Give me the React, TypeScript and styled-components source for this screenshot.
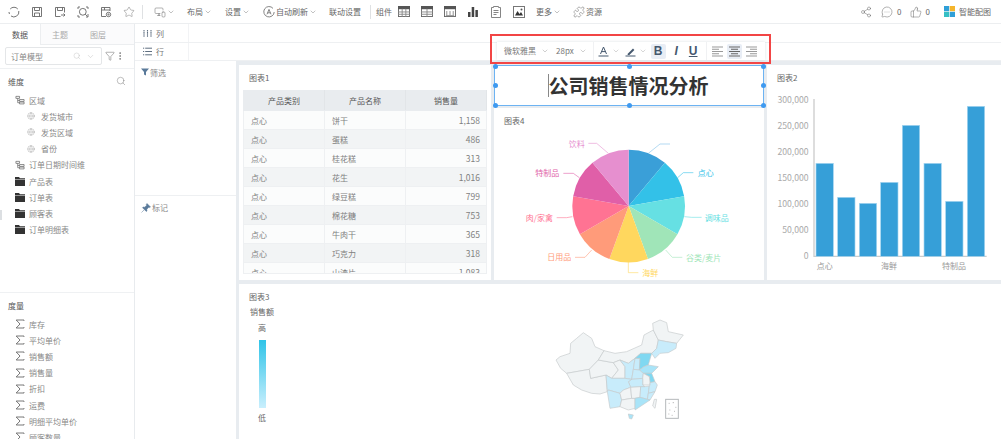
import React from "react";
import styled, { createGlobalStyle } from "styled-components";
import {
  ChevronDown,
  EllipsisVertical,
  Filter,
  Globe,
  MessageCircleMore,
  MonitorSmartphone,
  Puzzle,
  Search,
  Share2,
  Star,
  ThumbsUp,
} from "lucide-react";

const GlobalStyle = createGlobalStyle`
  html, body {
    margin: 0;
    background: #fff;
  }
  * {
    box-sizing: border-box;
  }
`;

const Page = styled.div`
  width: 1001px;
  height: 439px;
  position: relative;
  overflow: hidden;
  display: flex;
  flex-direction: column;
  background: #fff;
  color: #666;
  font-family: "Noto Sans CJK SC", "Liberation Sans", sans-serif;
  font-size: 8px;
`;

const Toolbar = styled.header`
  height: 24px;
  flex: none;
  display: flex;
  align-items: center;
  padding: 0 10px 0 2px;
  border-bottom: 1px solid #eceef0;
  color: #666;
`;

const ToolSlot = styled.span`
  width: 23px;
  height: 23px;
  flex: none;
  display: flex;
  align-items: center;
  justify-content: center;
  color: #777;
`;

const ToolDivider = styled.span<{ $ml: number }>`
  width: 1px;
  height: 14px;
  flex: none;
  margin-left: ${(p) => p.$ml}px;
  background: #dfe1e3;
`;

const ToolItem = styled.span<{ $ml: number }>`
  display: flex;
  align-items: center;
  flex: none;
  gap: 1px;
  line-height: 12px;
  margin-left: ${(p) => p.$ml}px;
  svg {
    color: #666;
    flex: none;
  }
`;

const ToolRight = styled.div`
  margin-left: auto;
  display: flex;
  align-items: center;
`;

const Body = styled.div`
  flex: 1;
  min-height: 0;
  display: flex;
`;

const Sidebar = styled.aside`
  width: 135px;
  flex: none;
  position: relative;
  display: flex;
  flex-direction: column;
  border-right: 1px solid #e8ebee;
`;

const Tabs = styled.div`
  height: 21px;
  flex: none;
  display: flex;
  background: #fbfbfc;
  border-bottom: 1px solid #eceef0;
`;

const Tab = styled.span<{ $active?: boolean }>`
  width: ${(p) => (p.$active ? 41 : 38)}px;
  height: ${(p) => (p.$active ? 21 : 20)}px;
  display: flex;
  align-items: center;
  justify-content: center;
  color: ${(p) => (p.$active ? "#555" : "#aaa")};
  background: ${(p) => (p.$active ? "#fff" : "transparent")};
  border-right: ${(p) => (p.$active ? "1px solid #eceef0" : "none")};
`;

const ModelRow = styled.div`
  height: 24px;
  flex: none;
  display: flex;
  align-items: flex-start;
  padding: 2px 0 0 5px;
  border-bottom: 1px solid #eff1f3;
`;

const ModelSelect = styled.div`
  width: 97px;
  height: 18px;
  display: flex;
  align-items: center;
  padding: 0 6px 0 5px;
  border: 1px solid #e4e6e8;
  border-radius: 2px;
  color: #888;
  svg {
    color: #bbb;
  }
  svg + svg {
    margin-left: 5px;
  }
`;

const ModelName = styled.span`
  flex: 1;
`;

const ModelTools = styled.div`
  display: flex;
  align-items: center;
  height: 18px;
  margin-left: 3px;
  color: #666;
`;

const FieldSection = styled.section<{ $height: number }>`
  height: ${(p) => p.$height}px;
  flex: none;
  overflow: hidden;
  padding-top: 3px;
`;

const SectionHead = styled.div`
  height: 18px;
  margin-bottom: 2px;
  display: flex;
  align-items: center;
  justify-content: space-between;
  padding: 0 8px;
  color: #555;
  svg {
    color: #666;
  }
`;

const FieldRow = styled.div<{ $child?: boolean }>`
  height: 16.2px;
  display: flex;
  align-items: center;
  gap: ${(p) => (p.$child ? 6 : 4)}px;
  padding-left: ${(p) => (p.$child ? 27 : 15)}px;
  color: #888;
  white-space: nowrap;
  svg {
    flex: none;
  }
`;

const SectionRule = styled.div`
  height: 1px;
  flex: none;
  background: #eff1f3;
`;

const ResizeHandle = styled.span`
  position: absolute;
  left: 0;
  top: 186px;
  width: 2px;
  height: 10px;
  background: #dcdfe2;
`;

const Work = styled.div`
  flex: 1;
  min-width: 0;
  display: flex;
  flex-direction: column;
`;

const ShelfRow = styled.div<{ $height: number }>`
  height: ${(p) => p.$height}px;
  flex: none;
  display: flex;
  align-items: center;
  border-bottom: 1px solid #eef0f2;
`;

const ShelfLabel = styled.span`
  width: 54px;
  height: 100%;
  display: flex;
  align-items: center;
  gap: 4px;
  padding-left: 8px;
  border-right: 1px solid #f2f3f5;
  color: #777;
`;

const WorkBody = styled.div`
  flex: 1;
  min-height: 0;
  display: flex;
`;

const Marks = styled.aside`
  width: 101px;
  flex: none;
  display: flex;
  flex-direction: column;
`;

const MarkBlock = styled.div<{ $height?: number }>`
  height: ${(p) => (p.$height ? `${p.$height}px` : "auto")};
  flex: ${(p) => (p.$height ? "none" : "1")};
  display: flex;
  align-items: flex-start;
  gap: 1px;
  padding: 7px 0 0 6px;
  line-height: 10px;
  color: #888;
  svg {
    flex: none;
  }
`;

const MarkRule = styled.div`
  height: 1px;
  background: #eef0f2;
`;

const Canvas = styled.main`
  flex: 1;
  min-width: 0;
  display: grid;
  grid-template-columns: 252px 270px 1fr;
  grid-template-rows: 215px 1fr;
  column-gap: 3px;
  row-gap: 4px;
  padding: 4px 0 0 3px;
  background: #e8ecf0;
`;

const Panel = styled.section`
  background: #fff;
  min-width: 0;
  min-height: 0;
  overflow: hidden;
`;

const MapPanel = styled(Panel)`
  grid-column: 1 / 4;
`;

const MiddleColumn = styled.div`
  display: flex;
  flex-direction: column;
  gap: 2px;
  min-width: 0;
`;

const PiePanel = styled(Panel)`
  flex: 1;
`;

const PanelTitle = styled.div`
  height: 24px;
  display: flex;
  align-items: center;
  padding-left: 10px;
  color: #666;
`;

const TitlePanel = styled.section`
  height: 41px;
  flex: none;
  position: relative;
  display: flex;
  align-items: center;
  justify-content: center;
  padding-right: 2px;
  background: #fff;
  border: 1px solid #6db3f2;
  color: #333;
  font-size: 20px;
  font-weight: 700;
`;

const Caret = styled.span`
  width: 1px;
  height: 23px;
  background: #888;
  flex: none;
`;

const Handle = styled.span<{ $x: number; $y: number }>`
  position: absolute;
  left: ${(p) => p.$x}%;
  top: ${(p) => p.$y}%;
  width: 5px;
  height: 5px;
  margin: -2.5px 0 0 -2.5px;
  border-radius: 50%;
  background: #3f9af0;
`;

const TableClip = styled.div`
  height: 184px;
  margin: 1px 4px 0;
  overflow: hidden;
  border-bottom: 1px solid #eef0f2;
`;

const DataTable = styled.table`
  width: 244px;
  table-layout: fixed;
  border-collapse: collapse;
  font-size: 8px;
`;

const HeadCell = styled.th`
  height: 20px;
  padding: 0;
  background: #e9ecef;
  border: 1px solid #e9ecef;
  border-right-color: #e2e5e8;
  color: #555;
  font-weight: 400;
  text-align: center;
`;

const BodyRow = styled.tr<{ $even: boolean }>`
  background: ${(p) => (p.$even ? "#f2f4f5" : "#fbfcfc")};
`;

const BodyCell = styled.td<{ $num?: boolean }>`
  height: 19px;
  padding: ${(p) => (p.$num ? "0 6px 0 0" : "0 0 0 7px")};
  border: 1px solid #eef0f2;
  color: #808080;
  text-align: ${(p) => (p.$num ? "right" : "left")};
  font-size: ${(p) => (p.$num ? "8.5px" : "8px")};
`;

const ChartSvg = styled.svg<{ $height: number }>`
  display: block;
  width: 100%;
  height: ${(p) => p.$height}px;
`;

const ChartText = styled.text`
  font-family: "Noto Sans CJK SC", "Liberation Sans", sans-serif;
`;

const MapRow = styled.div`
  display: flex;
  padding-left: 11px;
`;

const Legend = styled.div`
  width: 24px;
  flex: none;
  display: flex;
  flex-direction: column;
  align-items: center;
  line-height: 8px;
  color: #666;
  white-space: nowrap;
`;

const LegendLevel = styled.span<{ $mt: number }>`
  margin-top: ${(p) => p.$mt}px;
`;

const LegendBar = styled.span`
  width: 7px;
  height: 68px;
  flex: none;
  margin-top: 8px;
  background: linear-gradient(#2fc4e8, #c9effd);
`;

const MapSvg = styled.svg`
  width: 200px;
  height: 129px;
  flex: none;
  margin: 2px 0 0 246px;
`;

const FloatBar = styled.div`
  position: absolute;
  left: 497px;
  top: 42px;
  width: 268px;
  height: 18px;
  display: flex;
  align-items: center;
  background: #fff;
  box-shadow: 0 0 3px rgba(90, 110, 130, 0.2);
  color: #777;
`;

const FloatFocus = styled.div`
  position: absolute;
  left: 490px;
  top: 34px;
  width: 281px;
  height: 30px;
  border: 2px solid #f24545;
  pointer-events: none;
`;

const FloatText = styled.span<{ $ml: number }>`
  margin-left: ${(p) => p.$ml}px;
  display: flex;
  align-items: center;
  gap: 5px;
  line-height: 12px;
  flex: none;
  svg {
    color: #888;
  }
`;

const FloatSep = styled.span<{ $ml: number }>`
  width: 1px;
  height: 18px;
  flex: none;
  margin-left: ${(p) => p.$ml}px;
  background: #f0f1f3;
`;

const FloatButton = styled.span<{ $on?: boolean; $ml: number; $italic?: boolean; $under?: boolean }>`
  width: 15px;
  height: 15px;
  flex: none;
  margin-left: ${(p) => p.$ml}px;
  display: flex;
  align-items: center;
  justify-content: center;
  border-radius: 2px;
  background: ${(p) => (p.$on ? "#e8edf5" : "transparent")};
  color: #45586e;
  font-family: "Liberation Sans", sans-serif;
  font-size: 12px;
  font-weight: 700;
  font-style: ${(p) => (p.$italic ? "italic" : "normal")};
  text-decoration: ${(p) => (p.$under ? "underline" : "none")};
`;

const ColorMark = styled.span<{ $ml: number }>`
  margin-left: ${(p) => p.$ml}px;
  flex: none;
  display: flex;
  align-items: center;
  color: #45586e;
  svg:last-child {
    margin-left: 3px;
    color: #999;
  }
`;

const tableRows = [
  ["饼干", "1,158"],
  ["蛋糕", "486"],
  ["桂花糕", "313"],
  ["花生", "1,016"],
  ["绿豆糕", "799"],
  ["棉花糖", "753"],
  ["牛肉干", "365"],
  ["巧克力", "318"],
  ["山渣片", "1,083"],
];

const regionFields = ["发货城市", "发货区域", "省份"];
const tables = ["产品表", "订单表", "顾客表", "订单明细表"];
const measures = ["库存", "平均单价", "销售额", "销售量", "折扣", "运费", "明细平均单价", "顾客数量"];

const handles = [
  [0, 0],
  [50, 0],
  [100, 0],
  [0, 50],
  [100, 50],
  [0, 100],
  [50, 100],
  [100, 100],
];

const slices = ["#3a9fd8", "#33c1e8", "#66e0e3", "#a0e5b8", "#ffd75e", "#ff9b7a", "#ff7393", "#e05fa8", "#e68fcf"];

const pieLabels = [
  { text: "", color: "#7cc0e8", line: "460,145 495,117 525,117", x: 0, y: 0 },
  { text: "点心", color: "#33c1e8", line: "548,218 565,203 595,203", x: 632, y: 202 },
  { text: "调味品", color: "#66e0e3", line: "568,335 590,337 620,337", x: 665, y: 336 },
  { text: "谷类/麦片", color: "#a0e5b8", line: "512,435 532,457 562,457", x: 626, y: 456 },
  { text: "海鲜", color: "#ffd75e", line: "400,470 400,503 430,503", x: 466, y: 501 },
  { text: "日用品", color: "#ff9b7a", line: "290,435 270,457 240,457", x: 193, y: 455 },
  { text: "肉/家禽", color: "#ff7393", line: "232,335 215,338 185,338", x: 133, y: 337 },
  { text: "特制品", color: "#e05fa8", line: "253,218 235,205 205,205", x: 157, y: 201 },
  { text: "饮料", color: "#e68fcf", line: "340,145 305,115 280,115", x: 245, y: 114 },
];

const slicePath = (i: number) => {
  const cx = 401;
  const cy = 303;
  const r = 169;
  const a0 = ((i * 40 - 90) * Math.PI) / 180;
  const a1 = (((i + 1) * 40 - 90) * Math.PI) / 180;
  const p = (a: number) => `${cx + r * Math.cos(a)},${cy + r * Math.sin(a)}`;
  return `M${cx},${cy} L${p(a0)} A${r},${r} 0 0 1 ${p(a1)} Z`;
};

const bars = [
  { x: 153, top: 295 },
  { x: 218, top: 397 },
  { x: 283, top: 415 },
  { x: 347, top: 352 },
  { x: 412, top: 181 },
  { x: 477, top: 295 },
  { x: 542, top: 409 },
  { x: 607, top: 124 },
];

const yTicks = [
  ["300,000", 102],
  ["250,000", 180],
  ["200,000", 258],
  ["150,000", 336],
  ["100,000", 414],
  ["50,000", 492],
  ["0", 570],
] as const;

const GRAY = "#f1f4f5";
const PALE = "#c8ecfb";
const MID = "#a9e4f8";
const DEEP = "#80d8f1";

// outlines share their corner points so no holes show between provinces
const provinces = [
  { fill: GRAY, d: "M108,150 L120,140 L150,130 L152,100 L170,85 L190,68 L215,85 L225,110 L252,122 L235,150 L208,178 L140,190 L122,175 Z" },
  { fill: GRAY, d: "M140,190 L208,178 L212,205 L258,195 L262,245 L240,252 L215,250 L185,240 L160,225 Z" },
  { fill: GRAY, d: "M208,178 L235,150 L280,158 L295,180 L275,205 L258,195 L212,205 Z" },
  { fill: GRAY, d: "M252,122 L285,130 L320,125 L365,105 L372,75 L400,60 L415,90 L410,115 L395,130 L362,130 L345,145 L325,160 L300,150 L280,158 L235,150 Z" },
  { fill: GRAY, d: "M400,60 L398,40 L420,30 L440,38 L445,65 L490,75 L470,100 L440,95 L415,90 Z" },
  { fill: GRAY, d: "M280,158 L300,150 L315,170 L315,205 L275,205 L295,180 Z" },
  { fill: PALE, d: "M300,150 L325,160 L345,145 L340,178 L335,208 L315,205 L315,170 Z" },
  { fill: PALE, d: "M345,145 L360,145 L358,180 L340,178 Z" },
  { fill: DEEP, d: "M345,145 L362,130 L395,130 L385,165 L372,170 L358,180 L360,145 Z" },
  { fill: PALE, d: "M415,90 L440,95 L470,100 L468,115 L445,128 L420,130 L405,145 L395,130 L410,115 Z" },
  { fill: MID, d: "M358,180 L372,170 L385,165 L415,170 L395,190 L370,190 Z" },
  { fill: PALE, d: "M340,178 L358,180 L370,190 L368,205 L335,208 Z" },
  { fill: DEEP, d: "M370,190 L395,190 L405,215 L390,218 L388,200 Z" },
  { fill: GRAY, d: "M370,190 L388,200 L390,218 L390,225 L368,225 L368,205 Z" },
  { fill: PALE, d: "M335,208 L368,205 L368,225 L375,230 L332,232 L325,215 Z" },
  { fill: PALE, d: "M258,195 L275,205 L315,205 L335,208 L325,215 L332,232 L310,240 L300,250 L265,240 L262,245 Z" },
  { fill: PALE, d: "M262,245 L265,240 L300,250 L305,270 L300,290 L270,295 Z" },
  { fill: GRAY, d: "M300,250 L310,240 L332,232 L335,265 L305,270 Z" },
  { fill: GRAY, d: "M305,270 L335,265 L345,265 L345,295 L325,300 L300,290 Z" },
  { fill: GRAY, d: "M332,232 L362,230 L360,262 L345,265 L335,265 Z" },
  { fill: PALE, d: "M362,230 L375,230 L388,228 L385,250 L382,268 L360,262 Z" },
  { fill: PALE, d: "M390,218 L405,215 L412,225 L405,245 L385,250 L388,228 L390,225 Z" },
  { fill: PALE, d: "M385,250 L405,245 L390,270 L382,268 Z" },
  { fill: MID, d: "M360,262 L382,268 L390,270 L345,300 L345,265 Z" },
  { fill: MID, d: "M325,312 L340,315 L335,327 L328,325 Z" },
  { fill: GRAY, d: "M403,268 L410,268 L405,295 L398,288 Z" },
];

const stroke = { fill: "none", stroke: "#666", strokeWidth: 0.9 };

const RingGlyph = () => (
  <svg width="12" height="12" viewBox="0 0 12 12">
    <path d="M2.2 3A5 5 0 0 1 9.8 3M10.8 5A5 5 0 0 1 3 10M1.5 8A5 5 0 0 1 1 6" {...stroke} />
  </svg>
);

const SaveGlyph = () => (
  <svg width="12" height="12" viewBox="0 0 12 12">
    <path d="M1.5 1.5h9v9h-9zM3.5 1.5v3h5v-3M3.5 10.5v-3.5h5v3.5" {...stroke} />
  </svg>
);

const SaveAsGlyph = () => (
  <svg width="12" height="12" viewBox="0 0 12 12">
    <path d="M6.5 10.5h-5v-9h9v5M3.5 1.5v3h5v-3M7 9h4M9.5 7.5L11 9l-1.5 1.5" {...stroke} />
  </svg>
);

const PreviewGlyph = () => (
  <svg width="12" height="12" viewBox="0 0 12 12">
    <path d="M1 3V1h2M9 1h2v2M1 9v2h2M11 8v3H9" {...stroke} />
    <circle cx="5.8" cy="5.8" r="3.4" {...stroke} />
    <path d="M8.2 8.2l2.3 2.3" {...stroke} />
  </svg>
);

const TemplateGlyph = () => (
  <svg width="12" height="12" viewBox="0 0 12 12">
    <path d="M6 10.5H1.5v-9h8.5V5M1.5 4h8.5M4.5 1.5V4" {...stroke} />
    <circle cx="8.5" cy="8.5" r="2.2" {...stroke} />
    <circle cx="8.5" cy="8.5" r="0.6" {...stroke} />
  </svg>
);

const TableGlyph = ({ variant }: { variant: number }) => (
  <svg width="12" height="11" viewBox="0 0 13 12">
    <rect x="0.5" y="0.5" width="12" height="11" fill="#fff" stroke="#666" />
    <rect x="0" y="0" width="13" height="3.5" fill="#555" />
    {variant === 2 ? (
      <path d="M3 5.5V10M6.5 5.5V10M10 5.5V10M2 10.5H11" stroke="#888" fill="none" />
    ) : (
      <path d={variant === 1 ? "M0 6.5H13M0 9H13M6.5 3V12" : "M0 6.5H13M0 9H13M4.5 3V12M8.5 3V12"} stroke="#888" fill="none" />
    )}
  </svg>
);

const BarGlyph = () => (
  <svg width="12" height="12" viewBox="0 0 12 12">
    <path d="M1 6h2.5v5H1zM4.7 1h2.5v10H4.7zM8.4 4h2.5v7H8.4z" fill="#444" />
  </svg>
);

const NoteGlyph = () => (
  <svg width="12" height="13" viewBox="0 0 12 13">
    <path d="M1.5 2.5h2V1.5h5v1h2v10h-9z M3.5 5.5h5M3.5 7.5h5M3.5 9.5h3" fill="none" stroke="#777" strokeWidth="0.9" />
  </svg>
);

const ImageGlyph = () => (
  <svg width="12" height="12" viewBox="0 0 12 12">
    <rect x="0.5" y="0.5" width="11" height="11" fill="#fff" stroke="#777" />
    <path d="M2 9.5L4.5 5l2 3 1.5-2 2 3.5z" fill="#333" />
    <circle cx="8.5" cy="3.5" r="1" fill="#555" />
  </svg>
);

const AutoGlyph = () => (
  <svg width="12" height="12" viewBox="0 0 12 12">
    <path d="M10 2.4A5.2 5.2 0 1 0 11.2 6" fill="none" stroke="#666" strokeWidth="0.8" />
    <path d="M4 8.3L6 3.4l2 4.9M4.7 6.8h2.6" fill="none" stroke="#666" strokeWidth="0.8" />
  </svg>
);

const LogoGlyph = () => (
  <svg width="11" height="11" viewBox="0 0 11 11">
    <rect x="0" y="0" width="5.2" height="5.2" fill="#2f9fd8" />
    <rect x="5.8" y="0" width="5.2" height="5.2" fill="#f5b52c" />
    <rect x="0" y="5.8" width="5.2" height="5.2" fill="#35bfc4" />
    <rect x="5.8" y="5.8" width="5.2" height="5.2" fill="#2f9fd8" />
  </svg>
);

const TreeGlyph = () => (
  <svg width="10" height="10" viewBox="0 0 11 10">
    <path d="M1 1h4v2.2H1zM3 3.2V8h2M3 5.5h2M5 4.5h5v2H5zM5 7.3h5v2H5z" fill="none" stroke="#666" strokeWidth="0.8" />
  </svg>
);

const FolderGlyph = () => (
  <svg width="10" height="9" viewBox="0 0 10 9">
    <path d="M0 0h4l1 1.2h5V2H0zM0 2.6h10V9H0z" fill="#333" />
  </svg>
);

const SumGlyph = () => (
  <svg width="10" height="10" viewBox="0 0 10 10">
    <path d="M9 1.8V1H1.2L5 5 1.2 9H9v-.8" fill="none" stroke="#555" strokeWidth="0.8" />
  </svg>
);

const ColumnsGlyph = () => (
  <svg width="9" height="9" viewBox="0 0 9 9">
    <path d="M1 1v7M4.5 1v7M8 1v7" fill="none" stroke="#5f6f80" strokeWidth="1.1" strokeDasharray="1.6 0.5" />
  </svg>
);

const RowsGlyph = () => (
  <svg width="9" height="9" viewBox="0 0 9 9">
    <path d="M0 1.2h1.2M2.2 1.2H9M0 4.5h1.2M2.2 4.5H9M0 7.8h1.2M2.2 7.8H9" fill="none" stroke="#5f6f80" strokeWidth="1" />
  </svg>
);

const FunnelGlyph = () => (
  <svg width="8" height="8" viewBox="0 0 8 8">
    <path d="M0 .5h8L5 4v3.5L3 6.5V4z" fill="#5a7a9a" />
  </svg>
);

const PinGlyph = () => (
  <svg width="10" height="10" viewBox="0 0 10 10">
    <path d="M6 .5L9.5 4 8.5 4.6 7.8 4.2 5.8 6.3 6 8 5.2 8.4 1.6 4.8 2 4l1.7.2 2-2-.4-.7zM3 7L.5 9.5" fill="#5a7a9a" stroke="#5a7a9a" strokeWidth="0.5" />
  </svg>
);

const FontColorGlyph = () => (
  <svg width="11" height="11" viewBox="0 0 11 11">
    <path d="M2.5 8L5.5 1l3 7M3.6 5.6h3.8" fill="none" stroke="#45586e" strokeWidth="1" />
    <rect x="0.5" y="9.5" width="10" height="1" fill="#45586e" />
  </svg>
);

const FillColorGlyph = () => (
  <svg width="11" height="11" viewBox="0 0 11 11">
    <path d="M3 7.5L8 2.5l1.4 1.4-5 5L2.5 9z" fill="#45586e" />
    <rect x="0.5" y="9.5" width="10" height="1" fill="#45586e" />
  </svg>
);

const AlignGlyph = ({ side, color }: { side: "left" | "center" | "right"; color: string }) => {
  const line = (y: number, w: number) => {
    const x = side === "left" ? 0 : side === "right" ? 11 - w : (11 - w) / 2;
    return `M${x},${y}h${w}`;
  };
  return (
    <svg width="11" height="11" viewBox="0 0 11 11">
      <path
        d={[line(1, 11), line(3.2, 7), line(5.5, 11), line(7.8, 7), line(10, 11)].join("")}
        fill="none"
        stroke={color}
        strokeWidth="1.1"
      />
    </svg>
  );
};

const Icon = { size: 12, strokeWidth: 1 };
const Chevron = () => <ChevronDown size={8} strokeWidth={1.2} />;

export default function App() {
  return (
    <>
      <GlobalStyle />
      <Page>
        <Toolbar>
          <ToolSlot><RingGlyph /></ToolSlot>
          <ToolSlot><SaveGlyph /></ToolSlot>
          <ToolSlot><SaveAsGlyph /></ToolSlot>
          <ToolSlot><PreviewGlyph /></ToolSlot>
          <ToolSlot><TemplateGlyph /></ToolSlot>
          <ToolSlot><Star {...Icon} /></ToolSlot>
          <ToolDivider $ml={2} />
          <ToolItem $ml={11}><MonitorSmartphone {...Icon} /><Chevron /></ToolItem>
          <ToolItem $ml={12}>布局<Chevron /></ToolItem>
          <ToolItem $ml={13}>设置<Chevron /></ToolItem>
          <ToolItem $ml={13}><AutoGlyph />自动刷新<Chevron /></ToolItem>
          <ToolItem $ml={12}>联动设置</ToolItem>
          <ToolDivider $ml={9} />
          <ToolItem $ml={5}>组件</ToolItem>
          <ToolSlot><TableGlyph variant={0} /></ToolSlot>
          <ToolSlot><TableGlyph variant={1} /></ToolSlot>
          <ToolSlot><TableGlyph variant={2} /></ToolSlot>
          <ToolSlot><BarGlyph /></ToolSlot>
          <ToolSlot><NoteGlyph /></ToolSlot>
          <ToolSlot><ImageGlyph /></ToolSlot>
          <ToolItem $ml={6}>更多<Chevron /></ToolItem>
          <ToolItem $ml={12}><Puzzle {...Icon} />资源</ToolItem>
          <ToolRight>
            <ToolItem $ml={0}><Share2 {...Icon} /></ToolItem>
            <ToolItem $ml={9}><MessageCircleMore {...Icon} /></ToolItem>
            <ToolItem $ml={4}>0</ToolItem>
            <ToolItem $ml={8}><ThumbsUp {...Icon} /></ToolItem>
            <ToolItem $ml={4}>0</ToolItem>
            <ToolItem $ml={14}><LogoGlyph /></ToolItem>
            <ToolItem $ml={4}>智能配图</ToolItem>
          </ToolRight>
        </Toolbar>

        <Body>
          <Sidebar>
            <Tabs>
              <Tab $active>数据</Tab>
              <Tab>主题</Tab>
              <Tab>图层</Tab>
            </Tabs>
            <ModelRow>
              <ModelSelect>
                <ModelName>订单模型</ModelName>
                <Search size={8} strokeWidth={1.2} />
                <ChevronDown size={9} strokeWidth={1.2} />
              </ModelSelect>
              <ModelTools>
                <Filter size={10} strokeWidth={1.2} />
                <EllipsisVertical size={10} strokeWidth={1.6} />
              </ModelTools>
            </ModelRow>
            <FieldSection $height={223}>
              <SectionHead>维度<Search size={10} strokeWidth={1} /></SectionHead>
              <FieldRow><TreeGlyph />区域</FieldRow>
              {regionFields.map((name) => (
                <FieldRow key={name} $child>
                  <Globe size={8} strokeWidth={1} color="#888" />
                  {name}
                </FieldRow>
              ))}
              <FieldRow><TreeGlyph />订单日期时间维</FieldRow>
              {tables.map((t) => (
                <FieldRow key={t}><FolderGlyph />{t}</FieldRow>
              ))}
            </FieldSection>
            <SectionRule />
            <FieldSection $height={146}>
              <SectionHead>度量</SectionHead>
              {measures.map((m) => (
                <FieldRow key={m}><SumGlyph />{m}</FieldRow>
              ))}
            </FieldSection>
            <ResizeHandle />
          </Sidebar>

          <Work>
            <ShelfRow $height={19}>
              <ShelfLabel><ColumnsGlyph />列</ShelfLabel>
            </ShelfRow>
            <ShelfRow $height={18}>
              <ShelfLabel><RowsGlyph />行</ShelfLabel>
            </ShelfRow>
            <WorkBody>
              <Marks>
                <MarkBlock $height={134}><FunnelGlyph />筛选</MarkBlock>
                <MarkRule />
                <MarkBlock><PinGlyph />标记</MarkBlock>
              </Marks>
              <Canvas>
                <Panel>
                  <PanelTitle>图表1</PanelTitle>
                  <TableClip>
                    <DataTable>
                      <thead>
                        <tr>
                          <HeadCell>产品类别</HeadCell>
                          <HeadCell>产品名称</HeadCell>
                          <HeadCell>销售量</HeadCell>
                        </tr>
                      </thead>
                      <tbody>
                        {tableRows.map(([name, value], i) => (
                          <BodyRow key={name} $even={i % 2 === 1}>
                            <BodyCell>点心</BodyCell>
                            <BodyCell>{name}</BodyCell>
                            <BodyCell $num>{value}</BodyCell>
                          </BodyRow>
                        ))}
                      </tbody>
                    </DataTable>
                  </TableClip>
                </Panel>

                <MiddleColumn>
                  <TitlePanel>
                    <Caret />公司销售情况分析
                    {handles.map(([x, y]) => (
                      <Handle key={`${x}-${y}`} $x={x} $y={y} />
                    ))}
                  </TitlePanel>
                  <PiePanel>
                    <PanelTitle>图表4</PanelTitle>
                    <ChartSvg $height={148} viewBox="-3 81 810 444" preserveAspectRatio="none">
                      {slices.map((c, i) => (
                        <path key={c} d={slicePath(i)} fill={c} />
                      ))}
                      {pieLabels.map((l) => (
                        <g key={l.line}>
                          <polyline points={l.line} fill="none" stroke={l.color} strokeWidth="2.5" opacity="0.7" />
                          <ChartText x={l.x} y={l.y} fontSize="24" fill={l.color} textAnchor="middle" dominantBaseline="central">
                            {l.text}
                          </ChartText>
                        </g>
                      ))}
                    </ChartSvg>
                  </PiePanel>
                </MiddleColumn>

                <Panel>
                  <PanelTitle>图表2</PanelTitle>
                  <ChartSvg $height={191} viewBox="6 72 702 573" preserveAspectRatio="none">
                    <path d="M147,102 V574 H665" fill="none" stroke="#ccc" strokeWidth="4" />
                    {yTicks.map(([t, y]) => (
                      <ChartText key={t} x="131" y={y} fontSize="26" fill="#aaa" textAnchor="end" dominantBaseline="central">
                        {t}
                      </ChartText>
                    ))}
                    {bars.map((b) => (
                      <rect key={b.x} x={b.x} y={b.top} width="52" height={574 - b.top} fill="#369fd8" stroke="#a6d6f0" strokeWidth="2" />
                    ))}
                    <ChartText x="179" y="600" fontSize="24" fill="#999" textAnchor="middle" dominantBaseline="central">点心</ChartText>
                    <ChartText x="372" y="600" fontSize="24" fill="#999" textAnchor="middle" dominantBaseline="central">海鲜</ChartText>
                    <ChartText x="567" y="600" fontSize="24" fill="#999" textAnchor="middle" dominantBaseline="central">特制品</ChartText>
                  </ChartSvg>
                </Panel>

                <MapPanel>
                  <PanelTitle>图表3</PanelTitle>
                  <MapRow>
                    <Legend>
                      销售额
                      <LegendLevel $mt={8}>高</LegendLevel>
                      <LegendBar />
                      <LegendLevel $mt={6}>低</LegendLevel>
                    </Legend>
                    <MapSvg viewBox="0 0 600 387">
                      {provinces.map((p) => (
                        <path key={p.d} d={p.d} fill={p.fill} stroke="#c6cacc" strokeWidth="2" strokeLinejoin="round" />
                      ))}
                      <rect x="437" y="268" width="38" height="57" fill="#fff" stroke="#b5b9bb" strokeWidth="3" />
                      <path d="M446,280h3M458,278h4M466,292h3M448,300h3M462,304h3M455,316h3M445,312h3" stroke="#999" strokeWidth="2" />
                    </MapSvg>
                  </MapRow>
                </MapPanel>
              </Canvas>
            </WorkBody>
          </Work>
        </Body>

        <FloatBar>
          <FloatText $ml={7}>微软雅黑<Chevron /></FloatText>
          <FloatText $ml={7}>28px<Chevron /></FloatText>
          <FloatSep $ml={6} />
          <ColorMark $ml={4}><FontColorGlyph /><Chevron /></ColorMark>
          <ColorMark $ml={5}><FillColorGlyph /><Chevron /></ColorMark>
          <FloatButton $on $ml={4}>B</FloatButton>
          <FloatButton $italic $ml={3}>I</FloatButton>
          <FloatButton $under $ml={2}>U</FloatButton>
          <FloatSep $ml={5} />
          <FloatButton $ml={3}><AlignGlyph side="left" color="#999" /></FloatButton>
          <FloatButton $on $ml={2}><AlignGlyph side="center" color="#666" /></FloatButton>
          <FloatButton $ml={2}><AlignGlyph side="right" color="#999" /></FloatButton>
        </FloatBar>
        <FloatFocus />
      </Page>
    </>
  );
}
